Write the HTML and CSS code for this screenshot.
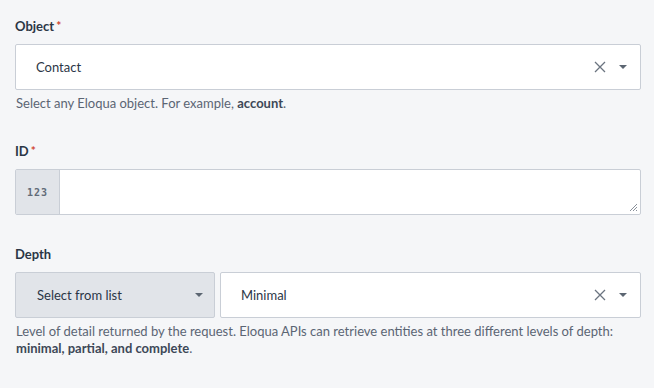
FILE: index.html
```html
<!DOCTYPE html>
<html lang="en">
<head>
    <meta charset="UTF-8">
    <title>Eloqua Object</title>
    <link rel="stylesheet" href="styles.css">
</head>
<body>
    <div class="form">
        <div class="field">
            <label class="label">Object<span class="req">*</span></label>
            <div class="box select-box">
                <span class="value">Contact</span>
                <span class="clear">
                    <svg width="12" height="12" viewBox="0 0 12 12"><path d="M1 1L11 11M11 1L1 11" stroke="#6b7480" stroke-width="1.3" fill="none"/></svg>
                </span>
                <span class="caret"></span>
            </div>
            <p class="help">Select any Eloqua object. For example, <b>account</b>.</p>
        </div>

        <div class="field">
            <label class="label">ID<span class="req">*</span></label>
            <div class="box id-box">
                <span class="prefix">123</span>
                <div class="area">
                    <svg class="grip" width="9" height="9" viewBox="0 0 9 9"><path d="M8 1L1 8M8 4L4 8M8 7L7 8" stroke="#8a919b" stroke-width="1" fill="none"/></svg>
                </div>
            </div>
        </div>

        <div class="field">
            <label class="label">Depth</label>
            <div class="depth-row">
                <div class="box mode-box">
                    <span class="value">Select from list</span>
                    <span class="caret"></span>
                </div>
                <div class="box select-box grow">
                    <span class="value">Minimal</span>
                    <span class="clear">
                        <svg width="12" height="12" viewBox="0 0 12 12"><path d="M1 1L11 11M11 1L1 11" stroke="#6b7480" stroke-width="1.3" fill="none"/></svg>
                    </span>
                    <span class="caret"></span>
                </div>
            </div>
            <p class="help">Level of detail returned by the request. Eloqua APIs can retrieve entities at three different levels of depth: <b>minimal, partial, and complete</b>.</p>
        </div>
    </div>
</body>
</html>
```

FILE: styles.css
```css
body {
    margin: 0;
    background-color: #f5f6f8;
    font-family: "Lato", "Noto Sans", sans-serif;
    color: #2b3646;
}
.form {
    padding: 17px 13px 0 15px;
}
.field {
    margin-bottom: 30px;
}
.label {
    display: block;
    font-size: 13px;
    font-weight: bold;
    line-height: 18px;
    margin-bottom: 9px;
}
.req {
    color: #d0452f;
    margin-left: 2px;
    font-size: 12px;
    vertical-align: top;
}
.box {
    display: flex;
    align-items: center;
    height: 44px;
    background: white;
    border: 1px solid #c9ced6;
    border-radius: 2px;
    font-size: 13px;
}
.select-box .value {
    flex-grow: 1;
    padding-left: 20px;
}
.clear {
    display: flex;
    margin-right: 13px;
}
.caret {
    width: 0;
    height: 0;
    border-left: 4px solid transparent;
    border-right: 4px solid transparent;
    border-top: 4px solid #5c6672;
    margin-right: 13px;
}
.help {
    margin: 5px 0 0 1px;
    font-size: 13px;
    line-height: 17px;
    color: #5b6574;
}
.help b {
    color: #3d4857;
}
.id-box {
    align-items: stretch;
}
.prefix {
    width: 43px;
    background: #e1e4e9;
    border-right: 1px solid #c9ced6;
    display: flex;
    align-items: center;
    justify-content: center;
    font-family: "DejaVu Sans Mono", monospace;
    font-size: 10px;
    font-weight: bold;
    color: #616b78;
    letter-spacing: 1px;
}
.area {
    flex-grow: 1;
    display: flex;
    align-items: flex-end;
    justify-content: flex-end;
    padding: 0 2px 2px 0;
}
.depth-row {
    display: flex;
    gap: 5px;
}
.mode-box {
    width: 198px;
    background: #e1e4e9;
}
.mode-box .value {
    flex-grow: 1;
    padding-left: 21px;
}
.mode-box .caret {
    margin-right: 11px;
}
.grow {
    flex-grow: 1;
}
```
